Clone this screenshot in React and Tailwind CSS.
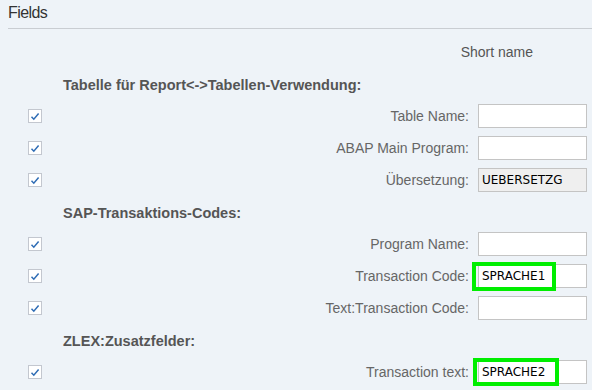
import React from "react";

function Check() {
  return (
    <div className="w-[14px] h-[14px] bg-white border border-[#c3c7cf] flex items-center justify-center">
      <svg width="10" height="9" viewBox="0 0 10 9">
        <path d="M1.5 4.8 L3.8 7.2 L8.6 1.4" fill="none" stroke="#2f6db5" strokeWidth="1.5" />
      </svg>
    </div>
  );
}

function Row({ label, value, readOnly, green }) {
  return (
    <div className="flex items-center h-[32px]">
      <div className="w-[63px] pl-[28px] flex items-center">
        <Check />
      </div>
      <div className="flex-1 text-right pr-[9px] text-[14px] text-[#666666]">{label}</div>
      <div className="relative w-[109px] h-[24px] mr-[5px]">
        <div
          className={
            "w-full h-full border flex items-center pl-[3px] text-[12px] text-black " +
            (readOnly ? "bg-[#efefef] border-[#c4c4c4]" : "bg-white border-[#c4c4c4]")
          }
          style={{ fontFamily: '"DejaVu Sans", sans-serif' }}
        >
          {value}
        </div>
        {green}
      </div>
    </div>
  );
}

function Heading({ children }) {
  return (
    <div className="h-[32px] flex items-center pl-[63px] pt-[4px] text-[14.5px] font-bold text-[#555555]">
      {children}
    </div>
  );
}

export default function App() {
  return (
    <div
      className="w-[592px] h-[390px] bg-[#eef3f8] overflow-hidden"
      style={{ fontFamily: '"Liberation Sans", Arial, sans-serif' }}
    >
      <div className="ml-[8px] h-[29px] border-b border-[#c9cdd2] flex items-end pb-[3px] text-[16px] tracking-[-0.6px] text-[#333333]">
        Fields
      </div>
      <div className="h-[7px]" />
      <div className="h-[32px] flex items-center justify-end pr-[59px] text-[14px] text-[#555555]">
        Short name
      </div>
      <Heading>Tabelle für Report&lt;-&gt;Tabellen-Verwendung:</Heading>
      <Row label="Table Name:" />
      <Row label="ABAP Main Program:" />
      <Row label="Übersetzung:" value="UEBERSETZG" readOnly />
      <Heading>SAP-Transaktions-Codes:</Heading>
      <Row label="Program Name:" />
      <Row
        label="Transaction Code:"
        value="SPRACHE1"
        green={<div className="absolute left-[-6px] top-[-2px] w-[84px] h-[29px] border-[4px] border-[#00ee00]" />}
      />
      <Row label="Text:Transaction Code:" />
      <Heading>ZLEX:Zusatzfelder:</Heading>
      <Row
        label="Transaction text:"
        value="SPRACHE2"
        green={<div className="absolute left-[-5px] top-[-2px] w-[86px] h-[28px] border-[4px] border-[#00ee00]" />}
      />
    </div>
  );
}
